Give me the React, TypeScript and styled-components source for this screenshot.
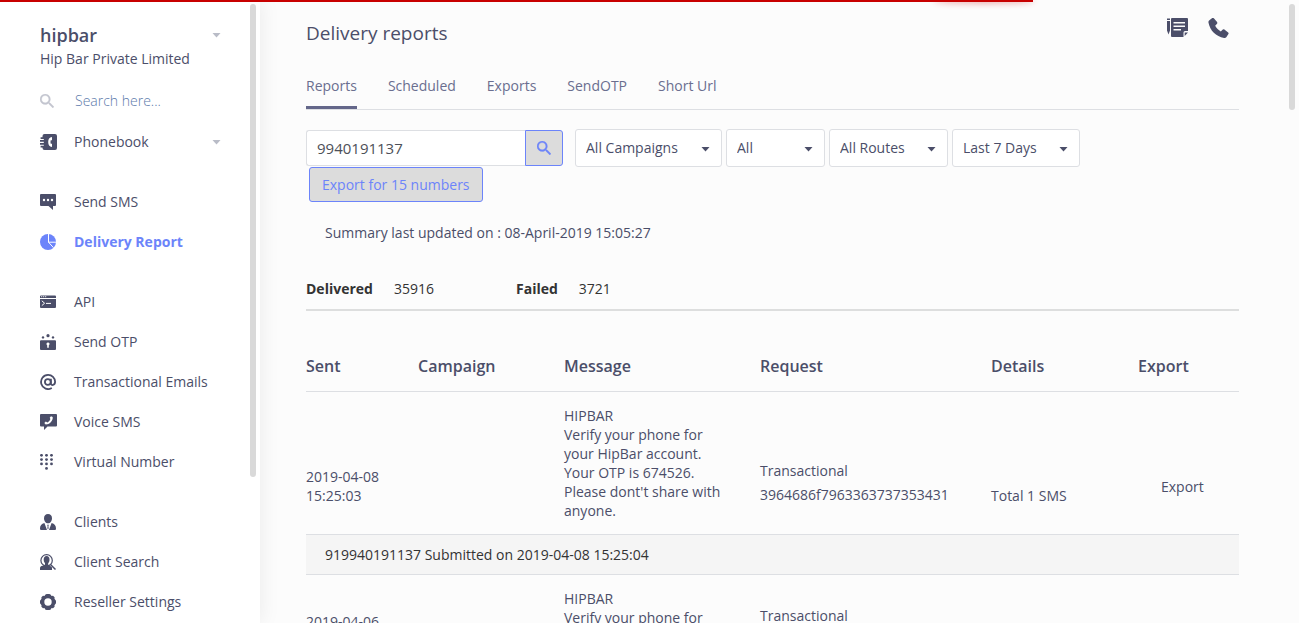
import React from "react";
import styled, { createGlobalStyle } from "styled-components";

const ink = "#4b4e69";
const accent = "#6c84fa";
const line = "#dddfe3";

const GlobalStyle = createGlobalStyle`
  * { box-sizing: border-box; }
  body {
    margin: 0;
    background: #fcfcfc;
    color: ${ink};
    font: 14px/20px "Open Sans", "Noto Sans", sans-serif;
  }
  button, input, select { font: inherit; color: inherit; }
`;

const Shell = styled.div`
  display: grid;
  grid-template-columns: 260px minmax(0, 1fr);
  height: 100vh;
  overflow: hidden;
`;

const Progress = styled.div`
  position: fixed;
  z-index: 5;
  top: 0;
  left: 0;
  height: 2px;
  background: #c80000;
  &::after {
    content: "";
    position: absolute;
    top: 0;
    right: 0;
    width: 100px;
    height: 2px;
    border-radius: 100%;
    opacity: 0.45;
    box-shadow: 1px 0 6px 1px #c80000;
  }
`;

const Pane = styled.div`
  position: relative;
  min-width: 0;
  height: 100vh;
`;

const SidePane = styled(Pane)`
  z-index: 1;
  background: #fff;
  box-shadow: 0 0 20px rgba(0, 0, 0, 0.08);
`;

const Thumb = styled.div`
  position: absolute;
  top: 4px;
  right: 4px;
  width: 6px;
  border-radius: 3px;
  background: #d9d9d9;
`;

const Scroller = styled.div`
  height: 100%;
  overflow-y: auto;
  scrollbar-width: none;
`;

const SideScroller = styled(Scroller)`
  padding: 23px 39px 20px 40px;
`;

const Account = styled.button`
  display: flex;
  justify-content: space-between;
  align-items: flex-start;
  width: 100%;
  padding: 0;
  border: 0;
  background: none;
  text-align: left;
  white-space: nowrap;
`;

const AccountName = styled.strong`
  display: block;
  margin-bottom: 2px;
  font-size: 18px;
  font-weight: 600;
  line-height: 24px;
`;

const CaretBox = styled.span`
  display: flex;
  align-items: center;
  height: 24px;
  margin-left: auto;
`;

const SearchRow = styled.label`
  display: flex;
  align-items: center;
  gap: 21px;
  height: 40px;
  margin-top: 12px;
  margin-bottom: 1px;
  color: #c3c5cf;
`;

const SearchInput = styled.input`
  flex: 1;
  min-width: 0;
  padding: 0;
  border: 0;
  outline: 0;
  background: none;
  color: ${ink};
  &::placeholder { color: #5c7aab; opacity: 1; font-weight: 300; }
`;

const NavGroup = styled.ul`
  margin: 0 0 20px;
  padding: 0;
  list-style: none;
`;

const NavLink = styled.a<{ $active?: boolean }>`
  display: flex;
  align-items: center;
  gap: 17px;
  height: 40px;
  color: ${(p) => (p.$active ? accent : ink)};
  font-weight: ${(p) => (p.$active ? 700 : 400)};
  text-decoration: none;
  white-space: nowrap;
`;

const IconSlot = styled.span`
  display: flex;
  width: 17px;
  flex: none;
`;

const Main = styled(Scroller).attrs({ as: "main" })`
  padding: 18px 60px 20px 46px;
`;

const Head = styled.header`
  display: flex;
  justify-content: space-between;
  align-items: flex-start;
`;

const Title = styled.h1`
  margin: 3px 0 0;
  font-size: 19px;
  font-weight: 400;
  line-height: 24px;
`;

const Actions = styled.div`
  display: flex;
  gap: 20px;
  padding-right: 10px;
`;

const IconButton = styled.button`
  display: flex;
  padding: 0;
  border: 0;
  background: none;
`;

const Tabs = styled.nav`
  display: flex;
  gap: 31px;
  margin-top: 31px;
  border-bottom: 1px solid ${line};
`;

const Tab = styled.a<{ $active?: boolean }>`
  padding-bottom: 10px;
  border-bottom: 3px solid ${(p) => (p.$active ? "#64678a" : "transparent")};
  color: #6a6e8f;
  text-decoration: none;
`;

const Filters = styled.form`
  display: flex;
  align-items: flex-start;
  gap: 12px;
  margin-top: 19px;
`;

const NumberColumn = styled.div`
  display: flex;
  flex-direction: column;
  align-items: flex-start;
  gap: 1px;
  width: 257px;
  padding-top: 1px;
`;

const InputGroup = styled.div`
  display: flex;
  width: 100%;
  height: 36px;
`;

const NumberInput = styled.input`
  flex: 1;
  min-width: 0;
  padding: 0 10px;
  border: 1px solid ${line};
  border-right: 0;
  border-radius: 3px 0 0 3px;
  background: #fff;
  color: #4d5058;
  font-size: 15px;
`;

const SearchButton = styled.button`
  display: flex;
  align-items: center;
  justify-content: center;
  width: 38px;
  padding: 0;
  border: 1px solid ${accent};
  border-radius: 0 3px 3px 0;
  background: #dcdcdc;
  color: ${accent};
`;

const ExportButton = styled.button`
  height: 35px;
  margin-left: 3px;
  padding: 0 12px;
  border: 1px solid ${accent};
  border-radius: 3px;
  background: #dcdcdc;
  color: ${accent};
  white-space: nowrap;
`;

const Selects = styled.div`
  display: flex;
  flex-wrap: wrap;
  gap: 4px;
`;

const SelectBox = styled.div`
  position: relative;
`;

const Select = styled.select<{ $width: number }>`
  display: block;
  width: ${(p) => p.$width}px;
  height: 38px;
  padding: 0 30px 0 10px;
  border: 1px solid ${line};
  border-radius: 3px;
  background: #fff;
  appearance: none;
`;

const SelectCaret = styled.span`
  position: absolute;
  right: 12px;
  top: 18px;
  display: flex;
  pointer-events: none;
`;

const Summary = styled.p`
  margin: 21px 0 0;
  padding-left: 19px;
`;

const Stats = styled.dl`
  display: flex;
  margin: 36px 0 0;
  padding-bottom: 10px;
  border-bottom: 2px solid #dddede;
  color: #333;
`;

const Stat = styled.div`
  display: flex;
  gap: 21px;
  width: 210px;
  dt { font-weight: 700; }
  dd { margin: 0; }
`;

const Table = styled.table`
  width: 100%;
  margin-top: 44px;
  border-spacing: 0;
  table-layout: fixed;
`;

const Th = styled.th`
  padding: 0 0 14px;
  border-bottom: 1px solid ${line};
  font-size: 16px;
  font-weight: 600;
  line-height: 22px;
  text-align: left;
`;

const Td = styled.td<{ $bottom?: number; $line?: number; $indent?: number }>`
  padding: 14px 26px ${(p) => p.$bottom ?? 29}px ${(p) => p.$indent ?? 0}px;
  line-height: ${(p) => p.$line ?? 19}px;
  vertical-align: bottom;
`;

const StatusCell = styled.td`
  height: 41px;
  padding: 0 19px;
  border: 1px solid ${line};
  border-width: 1px 0;
  background: #f5f5f5;
  color: #333;
`;

const RequestId = styled.div`
  white-space: nowrap;
`;

const ExportLink = styled.a`
  color: inherit;
  text-decoration: none;
`;

type SvgProps = { w?: number; h?: number; box?: string; children: React.ReactNode };

const Svg = ({ w = 16, h = 16, box, children }: SvgProps) => (
  <svg width={w} height={h} viewBox={box ?? `0 0 ${w} ${h}`} fill="currentColor" aria-hidden="true">
    {children}
  </svg>
);

const Caret = ({ color = ink }: { color?: string }) => (
  <svg width="9" height="5" viewBox="0 0 9 5" fill={color} aria-hidden="true">
    <path d="M0.5 0h8l-4 4.6z" />
  </svg>
);

const SearchIcon = () => (
  <Svg w={14} h={14} box="3 3 17.5 17.5">
    <path
      stroke="currentColor"
      strokeWidth="0.4"
      d="M15.5 14h-.79l-.28-.27A6.47 6.47 0 0 0 16 9.5 6.5 6.5 0 1 0 9.500 16c1.610 0 3.090-.590 4.230-1.570l.27.28v.79l5 4.990L20.490 19l-4.990-5zm-6 0C7.010 14 5 11.990 5 9.500S7.010 5 9.500 5 14 7.010 14 9.500 11.990 14 9.500 14z"
    />
  </Svg>
);

const CallIcon = () => (
  <Svg w={21} h={20} box="3 3 18 18">
    <path d="M7.800 3.300 10.700 6.700c.4.6.3 1.200-.2 1.700L9 9.900c1.200 2.200 2.900 3.900 5.100 5.200l1.500-1.500c.5-.5 1.100-.6 1.700-.2l3.400 2.700c.5.4.5.900.2 1.400l-1.900 2.800c-.5.6-1.200.8-2 .6C9.700 19.600 4.400 14.300 3 7.200c-.2-.9.100-1.700.8-2.200l2.600-1.900c.5-.3 1-.3 1.400.2z" />
  </Svg>
);

const NotesIcon = () => (
  <Svg w={21} h={20}>
    <path d="M0 3h3v9.500L1.500 16.500 0 12.500zM0 0.500h3V2H0z" />
    <path fillRule="evenodd" d="M5 0h15a1 1 0 0 1 1 1v12h-3a1.500 1.500 0 0 0-1.500 1.500v4.500H5a1 1 0 0 1-1-1V1a1 1 0 0 1 1-1zM6.500 4v1.500H18V4zM6.500 7.500V9H18V7.500zM6.500 11v1.500H14V11z" />
    <path d="M17.700 14.500H21L17.700 18z" />
  </Svg>
);

const icons: Record<string, React.ReactNode> = {
  phonebook: (
    <Svg w={17}>
      <path d="M4.500 0H15a2 2 0 0 1 2 2v12a2 2 0 0 1-2 2H4.500a2 2 0 0 1-2-2v-.5H.6v-1.700h3.200v-1H0V9.100h3.800V7.800H0V6.100h3.800V5H.6V3.300h1.900V2a2 2 0 0 1 2-2z" />
      <path fill="#fff" d="M12 3v3.300h-1.300a7 7 0 0 0 0 3.400H12V13c-2.600-.3-3.800-2.200-3.800-5s1.200-4.700 3.800-5z" />
    </Svg>
  ),
  sms: (
    <Svg>
      <path d="M1 0h14a1 1 0 0 1 1 1v10a1 1 0 0 1-1 1h-2v4l-4.500-4H1a1 1 0 0 1-1-1V1a1 1 0 0 1 1-1z" />
      <g fill="#fff">
        <circle cx="4" cy="6" r="1.200" />
        <circle cx="8" cy="6" r="1.200" />
        <circle cx="12" cy="6" r="1.200" />
      </g>
    </Svg>
  ),
  pie: (
    <Svg>
      <circle cx="8" cy="8" r="8" />
      <path d="M8.500 0v8.200H16M8.500 8.200l5 5.500" fill="none" stroke="#fff" strokeWidth="1" />
    </Svg>
  ),
  api: (
    <Svg>
      <path d="M1 1.500h14a1 1 0 0 1 1 1v1.400H0V2.500a1 1 0 0 1 1-1zM0 4.900h16V13a1 1 0 0 1-1 1H1a1 1 0 0 1-1-1z" />
      <path d="M1.800 6.800 4.600 9.200 1.800 11.600M6 9.400h5" fill="none" stroke="#fff" strokeWidth="1" />
      <path d="M1.200 2.700h1M3.200 2.700h1M5.200 2.700h1" stroke="#fff" strokeWidth="1" />
    </Svg>
  ),
  otp: (
    <Svg>
      <path fillRule="evenodd" d="M1 6.200h14a1 1 0 0 1 1 1V15a1 1 0 0 1-1 1H1a1 1 0 0 1-1-1V7.200a1 1 0 0 1 1-1zM8 8.500a1.500 1.500 0 0 0-.8 2.800v2.500h1.600v-2.500A1.500 1.500 0 0 0 8 8.500z" />
      <circle cx="3" cy="3.400" r="1.200" />
      <circle cx="8" cy="1.700" r="1.600" />
      <circle cx="13" cy="3.400" r="1.200" />
    </Svg>
  ),
  at: (
    <Svg>
      <g fill="none" stroke="currentColor" strokeWidth="1.800">
        <circle cx="7.800" cy="8" r="2.900" />
        <path d="M10.900 4.800v4.700c0 2.300 4.200 2.200 4.200-1.700A7 7 0 0 0 8 .9a7.100 7.100 0 1 0 3.800 13.200" />
      </g>
    </Svg>
  ),
  voice: (
    <Svg w={17}>
      <path d="M1 0h15a1 1 0 0 1 1 1v10.500a1 1 0 0 1-1 1H7.500L4 16v-3.500H1a1 1 0 0 1-1-1V1a1 1 0 0 1 1-1z" />
      <path fill="#fff" d="m11 2.200 1.700.8c.5 3.900-3.200 7.500-7 7.500L4.300 9l1.500-1.500 1.600.9c1.500-.7 2.500-1.900 3-3.300L9.700 3.700z" />
    </Svg>
  ),
  dialpad: (
    <Svg>
      {[1.5, 6.5, 11.5].map((x) =>
        [1.3, 5.6, 9.9].map((y) => <circle key={`${x}-${y}`} cx={x} cy={y} r="1.400" />)
      )}
      <circle cx="6.500" cy="14.400" r="1.400" />
    </Svg>
  ),
  clients: (
    <Svg>
      <path d="M8 0c2.500 0 4 1.700 4 4.200S10.400 9.300 8 9.300 4 6.700 4 4.200 5.500 0 8 0z" />
      <path d="M4.400 9 7 16H1.500C.5 16 0 15.500 0 14.500 0 11.500 1.500 10 4.400 9zM11.600 9 9 16h5.500c1 0 1.500-.5 1.500-1.500 0-3-1.500-4.500-4.400-5.500zM7.200 10.800h1.600l-.4 1.400.2 2L8 15.600l-.6-1.400.2-2z" />
    </Svg>
  ),
  clientSearch: (
    <Svg>
      <circle cx="6.600" cy="6.400" r="5.700" fill="none" stroke="currentColor" strokeWidth="1.200" />
      <ellipse cx="6.600" cy="5.800" rx="2.900" ry="3.700" />
      <path d="M5 8.500h3.200v2.300L11 12.500l1 1V16H0v-2.200c.3-1.400 1.500-1.700 2.500-2l2.500-1z" />
      <path d="m10.500 10.500 5 5" stroke="currentColor" strokeWidth="1.500" />
    </Svg>
  ),
  gear: (
    <Svg>
      <path fillRule="evenodd" d="M5.200.7 6.600 0h2.800l1.400.7.700 1.200 1.500-.2 1.600 1.600-.1 1.500.7 1 .8 1v2.400l-.8 1-.7 1 .1 1.500-1.600 1.600-1.500-.2-.7 1.300-1.400.6H6.600l-1.400-.6-.7-1.300-1.500.2-1.600-1.600.1-1.500-.7-1-.8-1V6.800l.8-1 .7-1-.1-1.500L3 1.700l1.500.2zM8 4.300a3.700 3.700 0 1 0 0 7.400 3.700 3.700 0 0 0 0-7.400z" />
    </Svg>
  ),
};

const navGroups = [
  [{ icon: "phonebook", label: "Phonebook", menu: true }],
  [
    { icon: "sms", label: "Send SMS" },
    { icon: "pie", label: "Delivery Report", active: true },
  ],
  [
    { icon: "api", label: "API" },
    { icon: "otp", label: "Send OTP" },
    { icon: "at", label: "Transactional Emails" },
    { icon: "voice", label: "Voice SMS" },
    { icon: "dialpad", label: "Virtual Number" },
  ],
  [
    { icon: "clients", label: "Clients" },
    { icon: "clientSearch", label: "Client Search" },
    { icon: "gear", label: "Reseller Settings" },
  ],
] as { icon: string; label: string; menu?: boolean; active?: boolean }[][];

const tabs = ["Reports", "Scheduled", "Exports", "SendOTP", "Short Url"];

const filters = [
  { name: "Campaign", value: "All Campaigns", width: 147 },
  { name: "Status", value: "All", width: 99 },
  { name: "Route", value: "All Routes", width: 119 },
  { name: "Period", value: "Last 7 Days", width: 128 },
];

const reports = [
  {
    date: "2019-04-08",
    time: "15:25:03",
    message: "Verify your phone for your HipBar account. Your OTP is 674526. Please dont't share with anyone.",
    request: "3964686f7963363737353431",
    status: "919940191137 Submitted on 2019-04-08 15:25:04",
  },
  {
    date: "2019-04-06",
    time: "",
    message: "Verify your phone for your HipBar account.",
    request: "",
    status: "",
  },
];

const loaded = 79.5;

export default function App() {
  return (
    <Shell>
      <GlobalStyle />
      <Progress style={{ width: `${loaded}%` }} />
      <SidePane>
        <SideScroller>
          <Account type="button">
            <span>
              <AccountName>hipbar</AccountName>
              Hip Bar Private Limited
            </span>
            <CaretBox>
              <Caret color="#b9bcc7" />
            </CaretBox>
          </Account>
          <SearchRow>
            <SearchIcon />
            <SearchInput type="text" placeholder="Search here..." aria-label="Search menu" />
          </SearchRow>
          <nav>
            {navGroups.map((group) => (
              <NavGroup key={group[0].label}>
                {group.map((item) => (
                  <li key={item.label}>
                    <NavLink href="#" $active={item.active}>
                      <IconSlot>{icons[item.icon]}</IconSlot>
                      {item.label}
                      {item.menu && (
                        <CaretBox>
                          <Caret color="#b9bcc7" />
                        </CaretBox>
                      )}
                    </NavLink>
                  </li>
                ))}
              </NavGroup>
            ))}
          </nav>
        </SideScroller>
        <Thumb style={{ height: "76%" }} />
      </SidePane>
      <Pane>
        <Main>
          <Head>
            <Title>Delivery reports</Title>
            <Actions>
              <IconButton type="button" aria-label="Notes">
                <NotesIcon />
              </IconButton>
              <IconButton type="button" aria-label="Call">
                <CallIcon />
              </IconButton>
            </Actions>
          </Head>
          <Tabs>
            {tabs.map((tab, i) => (
              <Tab key={tab} href="#" $active={i === 0}>
                {tab}
              </Tab>
            ))}
          </Tabs>
          <Filters onSubmit={(e) => e.preventDefault()}>
            <NumberColumn>
              <InputGroup>
                <NumberInput type="text" defaultValue="9940191137" aria-label="Mobile number" />
                <SearchButton type="submit" aria-label="Search">
                  <SearchIcon />
                </SearchButton>
              </InputGroup>
              <ExportButton type="button">Export for 15 numbers</ExportButton>
            </NumberColumn>
            <Selects>
              {filters.map((f) => (
                <SelectBox key={f.name}>
                  <Select $width={f.width} aria-label={f.name}>
                    <option>{f.value}</option>
                  </Select>
                  <SelectCaret>
                    <Caret />
                  </SelectCaret>
                </SelectBox>
              ))}
            </Selects>
          </Filters>
          <Summary>Summary last updated on : 08-April-2019 15:05:27</Summary>
          <Stats>
            <Stat>
              <dt>Delivered</dt>
              <dd>35916</dd>
            </Stat>
            <Stat>
              <dt>Failed</dt>
              <dd>3721</dd>
            </Stat>
          </Stats>
          <Table>
            <colgroup>
              <col width={112} />
              <col width={146} />
              <col width={196} />
              <col />
              <col width={147} />
              <col width={101} />
            </colgroup>
            <thead>
              <tr>
                {["Sent", "Campaign", "Message", "Request", "Details", "Export"].map((h) => (
                  <Th key={h} scope="col">
                    {h}
                  </Th>
                ))}
              </tr>
            </thead>
            <tbody>
              {reports.map((r) => (
                <React.Fragment key={r.date}>
                  <tr>
                    <Td>
                      {r.date}
                      <br />
                      {r.time || "\u00a0"}
                    </Td>
                    <Td />
                    <Td $bottom={14}>
                      HIPBAR
                      <br />
                      {r.message}
                      {!r.status && (
                        <>
                          <br />
                          &nbsp;
                        </>
                      )}
                    </Td>
                    <Td $line={24} $bottom={27}>
                      Transactional
                      <RequestId>{r.request || "\u00a0"}</RequestId>
                    </Td>
                    <Td>{r.status && "Total 1 SMS"}</Td>
                    <Td $bottom={38} $indent={23}>
                      {r.status && <ExportLink href="#">Export</ExportLink>}
                    </Td>
                  </tr>
                  {r.status && (
                    <tr>
                      <StatusCell colSpan={6}>{r.status}</StatusCell>
                    </tr>
                  )}
                </React.Fragment>
              ))}
            </tbody>
          </Table>
        </Main>
        <Thumb style={{ height: "17%" }} />
      </Pane>
    </Shell>
  );
}
